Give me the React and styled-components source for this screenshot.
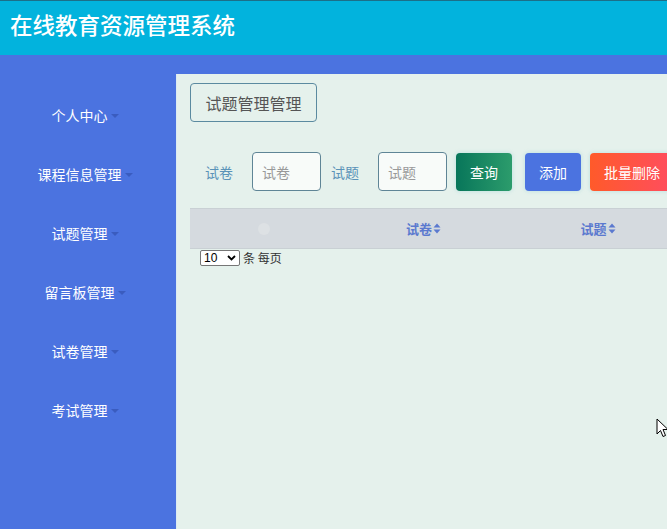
import React from "react";
import styled, { createGlobalStyle } from "styled-components";

const GlobalStyle = createGlobalStyle`
  html, body {
    margin: 0;
    padding: 0;
    height: 100%;
    overflow: hidden;
  }
  body {
    font-family: "Noto Sans CJK SC", "Noto Sans", sans-serif;
  }
  #root {
    height: 100%;
  }
`;

const PageStyle = styled.div`
  display: flex;
  flex-direction: column;
  height: 529px;
  width: 667px;
  overflow: hidden;
  position: relative;
`;

const HeaderStyle = styled.div`
  height: 55px;
  flex-shrink: 0;
  background-color: #02b3dd;
  border-top: 1px solid #1c6f88;
  box-sizing: border-box;
  display: flex;
  align-items: center;
  padding-left: 10px;
  padding-bottom: 8px;
`;

const TitleStyle = styled.h1`
  margin: 0;
  font-size: 22.5px;
  font-weight: 500;
  color: #ffffff;
`;

const BodyStyle = styled.div`
  flex: 1;
  display: flex;
  background-color: #4b73e0;
`;

const SideBarStyle = styled.div`
  width: 176px;
  flex-shrink: 0;
  padding-top: 30px;
  display: flex;
  flex-direction: column;
`;

const MenuItemStyle = styled.div`
  height: 59px;
  display: flex;
  align-items: center;
  justify-content: center;
  gap: 2px;
  color: #ffffff;
  font-size: 14px;
  padding-right: 6px;
`;

const CaretStyle = styled.span`
  display: inline-block;
  width: 0;
  height: 0;
  border-left: 4px solid transparent;
  border-right: 4px solid transparent;
  border-top: 4px solid #3a5cbf;
  margin-left: 1px;
  margin-top: 2px;
`;

const MainStyle = styled.div`
  flex: 1;
  margin-top: 19px;
  background-color: #e5f1ec;
  border-left: 1px solid #dcebf2;
  padding: 9px 0 0 13px;
  overflow: hidden;
  box-sizing: border-box;
`;

const CrumbStyle = styled.div`
  display: inline-flex;
  align-items: center;
  justify-content: center;
  width: 127px;
  height: 39px;
  box-sizing: border-box;
  border: 1px solid #5b8aa0;
  border-radius: 4px;
  color: #555;
  font-size: 16px;
`;

const SearchRowStyle = styled.div`
  display: flex;
  align-items: center;
  margin-top: 30px;
  height: 39px;
  white-space: nowrap;
`;

const LabelStyle = styled.span`
  color: #5a93b8;
  font-size: 14px;
  margin: ${p => p.$margin};
`;

const InputStyle = styled.div`
  width: 69px;
  height: 39px;
  flex-shrink: 0;
  box-sizing: border-box;
  border: 1px solid #5f8596;
  border-radius: 4px;
  background-color: #f8fbf9;
  display: flex;
  align-items: center;
  padding-left: 9px;
  color: #999;
  font-size: 14px;
`;

const ButtonStyle = styled.div`
  flex-shrink: 0;
  height: 38px;
  padding: 0 14px;
  border-radius: 4px;
  display: flex;
  align-items: center;
  justify-content: center;
  color: #ffffff;
  font-size: 14px;
  margin-left: ${p => p.$gap}px;
  background: ${p => p.$bg};
  box-shadow: 0 0 4px rgba(100, 190, 200, 0.35);
`;

const TableHeadStyle = styled.div`
  margin-top: 17px;
  display: flex;
  height: 41px;
  width: 520px;
  background-color: #d5dadf;
  border-top: 1px solid #c9d0d4;
  border-bottom: 1px solid #c9d0d4;
  box-sizing: border-box;
`;

const HeadCellStyle = styled.div`
  width: ${p => p.$width}px;
  flex-shrink: 0;
  display: flex;
  align-items: center;
  justify-content: center;
  color: #5b79cf;
  font-size: 13px;
  font-weight: 700;
`;

const CheckDotStyle = styled.span`
  width: 12px;
  height: 12px;
  border-radius: 50%;
  background-color: #dde1e4;
`;

const SortStyle = styled.svg`
  width: 8px;
  height: 11px;
  margin-left: 1px;
`;

const PagerStyle = styled.div`
  display: flex;
  align-items: center;
  margin-left: 10px;
  font-size: 12px;
  color: #333;
  gap: 3px;
`;

const SelectStyle = styled.div`
  width: 40px;
  height: 16px;
  box-sizing: border-box;
  border: 1px solid #767676;
  border-radius: 2px;
  background: #fff;
  display: flex;
  align-items: center;
  justify-content: space-between;
  padding: 0 3px 0 3px;
  font-size: 12px;
  font-family: "Liberation Sans", Arial, sans-serif;
  color: #000;
`;

const CursorStyle = styled.svg`
  position: absolute;
  left: 656px;
  top: 418px;
  width: 13px;
  height: 20px;
`;

const menus = ["个人中心", "课程信息管理", "试题管理", "留言板管理", "试卷管理", "考试管理"];

function SortIcon() {
  return (
    <SortStyle viewBox="0 0 8 11">
      <path d="M4 0.5 L7.5 4.5 H0.5 Z" fill="#5b79cf" />
      <path d="M4 10.5 L7.5 6.5 H0.5 Z" fill="#5b79cf" />
    </SortStyle>
  );
}

export default function App() {
  return (
    <>
      <GlobalStyle />
      <PageStyle>
        <HeaderStyle>
          <TitleStyle>在线教育资源管理系统</TitleStyle>
        </HeaderStyle>
        <BodyStyle>
          <SideBarStyle>
            {menus.map(m => (
              <MenuItemStyle key={m}>
                {m}
                <CaretStyle />
              </MenuItemStyle>
            ))}
          </SideBarStyle>
          <MainStyle>
            <CrumbStyle>试题管理管理</CrumbStyle>
            <SearchRowStyle>
              <LabelStyle $margin="0 19px 0 15px">试卷</LabelStyle>
              <InputStyle>试卷</InputStyle>
              <LabelStyle $margin="0 19px 0 10px">试题</LabelStyle>
              <InputStyle>试题</InputStyle>
              <ButtonStyle $gap={9} $bg="linear-gradient(90deg, #08765a, #2c9c6c)">查询</ButtonStyle>
              <ButtonStyle $gap={13} $bg="#4b73e0">添加</ButtonStyle>
              <ButtonStyle $gap={9} $bg="linear-gradient(90deg, #ff5a2a, #ff4d60)">批量删除</ButtonStyle>
            </SearchRowStyle>
            <TableHeadStyle>
              <HeadCellStyle $width={147}>
                <CheckDotStyle />
              </HeadCellStyle>
              <HeadCellStyle $width={173}>
                试卷<SortIcon />
              </HeadCellStyle>
              <HeadCellStyle $width={176}>
                试题<SortIcon />
              </HeadCellStyle>
            </TableHeadStyle>
            <PagerStyle>
              <SelectStyle>
                10
                <svg width="9" height="6" viewBox="0 0 9 6">
                  <path d="M1 1 L4.5 4.5 L8 1" stroke="#000" strokeWidth="1.8" fill="none" />
                </svg>
              </SelectStyle>
              条 每页
            </PagerStyle>
          </MainStyle>
        </BodyStyle>
        <CursorStyle viewBox="0 0 13 20">
          <path d="M1 1 V16 L4.5 12.5 L7 18.5 L9.5 17.5 L7 11.5 H12 Z" fill="#fff" stroke="#000" strokeWidth="1" />
        </CursorStyle>
      </PageStyle>
    </>
  );
}
